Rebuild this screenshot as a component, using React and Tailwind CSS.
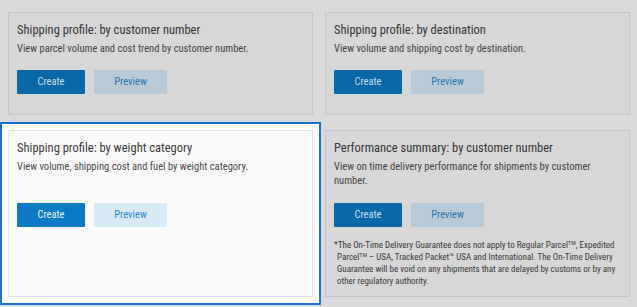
const cards = [
  {
    title: 'Shipping profile: by customer number',
    desc: 'View parcel volume and cost trend by customer number.',
  },
  {
    title: 'Shipping profile: by destination',
    desc: 'View volume and shipping cost by destination.',
  },
  {
    title: 'Shipping profile: by weight category',
    desc: 'View volume, shipping cost and fuel by weight category.',
    active: true,
    tall: true,
  },
  {
    title: 'Performance summary: by customer number',
    desc: 'View on time delivery performance for shipments by customer number.',
    tall: true,
    note: true,
  },
];

const ReportCard = ({ title, desc, active, tall, note }) => {
  return (
    <div
      className={
        active
          ? 'border border-[#e4e4e4] bg-[#fafafa] px-[8px] pt-[9px] pb-[9px] shadow-[0_0_0_6px_#ffffff,0_0_0_8px_#1c72d2]'
          : 'border border-[#c6c6c6] bg-[#d7d7d7] px-[8px] pt-[9px] pb-[9px]'
      }
    >
      <h2 className={`text-[12.5px] leading-[16px] ${active ? 'text-[#3a3a3a]' : 'text-[#353535]'}`}>{title}</h2>
      <p
        className={`mt-[4px] text-[10.5px] leading-[14px] ${tall ? 'min-h-[28px]' : ''} ${
          active ? 'text-[#4a4a4a]' : 'text-[#444444]'
        }`}
      >
        {desc}
      </p>
      <div className={`flex gap-[9px] ${tall ? 'mt-[15px]' : 'mt-[14px]'}`}>
        <button
          className={`h-[24px] w-[68px] rounded-[1px] text-[10.5px] ${
            active ? 'bg-[#0a7ac6] text-[#eaf4fb]' : 'bg-[#0868a8] text-[#c9dcea]'
          }`}
        >
          Create
        </button>
        <button
          className={`h-[24px] w-[73px] rounded-[1px] text-[10.5px] ${
            active ? 'bg-[#d8e9f6] text-[#2b86d2]' : 'bg-[#b8cad7] text-[#2a76b2]'
          }`}
        >
          Preview
        </button>
      </div>
      {note && (
        <p className="mt-[12px] pl-[3px] -indent-[3px] text-[9px] leading-[12px] text-[#3a3a3a]">
          *The On-Time Delivery Guarantee does not apply to Regular Parcel
          <span className="align-top text-[6px] leading-[8px]">TM</span>, Expedited Parcel
          <span className="align-top text-[6px] leading-[8px]">TM</span> – USA, Tracked Packet™ USA and International.
          The On-Time Delivery Guarantee will be void on any shipments that are delayed by customs or by any other
          regulatory authority.
        </p>
      )}
    </div>
  );
};

export default function App() {
  return (
    <div className="h-[307px] w-[637px] overflow-hidden bg-[#dadada] pl-[8px] pt-[12px] font-['Roboto',sans-serif] font-stretch-[82%]">
      <div className="grid w-[622px] grid-cols-[305px_305px] grid-rows-[103px_auto] gap-x-[12px] gap-y-[15px]">
        {cards.map((c) => (
          <ReportCard key={c.title} {...c} />
        ))}
      </div>
    </div>
  );
}
